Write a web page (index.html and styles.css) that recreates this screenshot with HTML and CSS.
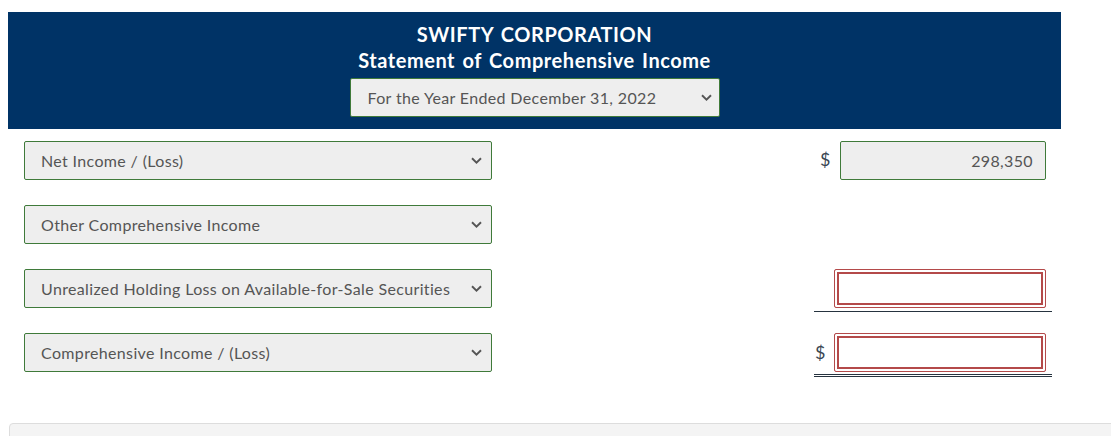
FILE: index.html
```html
<!DOCTYPE html>
<html>
<head>
<meta charset="utf-8">
<link rel="stylesheet" href="styles.css">
</head>
<body>
<div class="page">
  <div class="header">
    <div class="title">SWIFTY CORPORATION</div>
    <div class="title">Statement of Comprehensive Income</div>
    <div class="select period">
      <span>For the Year Ended December 31, 2022</span>
      <svg class="chev" width="11" height="7" viewBox="0 0 11 7"><path d="M1 1.2 L5.5 5.6 L10 1.2" fill="none" stroke="#555" stroke-width="1.9"/></svg>
    </div>
  </div>

  <div class="rows">
    <div class="row">
      <div class="select label"><span>Net Income / (Loss)</span><svg class="chev" width="11" height="7" viewBox="0 0 11 7"><path d="M1 1.2 L5.5 5.6 L10 1.2" fill="none" stroke="#555" stroke-width="1.9"/></svg></div>
      <div class="amount first">
        <span class="dollar">$</span>
        <div class="input filled">298,350</div>
      </div>
    </div>
    <div class="row">
      <div class="select label"><span>Other Comprehensive Income</span><svg class="chev" width="11" height="7" viewBox="0 0 11 7"><path d="M1 1.2 L5.5 5.6 L10 1.2" fill="none" stroke="#555" stroke-width="1.9"/></svg></div>
    </div>
    <div class="row">
      <div class="select label"><span>Unrealized Holding Loss on Available-for-Sale Securities</span><svg class="chev" width="11" height="7" viewBox="0 0 11 7"><path d="M1 1.2 L5.5 5.6 L10 1.2" fill="none" stroke="#555" stroke-width="1.9"/></svg></div>
      <div class="amount single">
        <span class="dollar"></span>
        <div class="input empty"></div>
      </div>
    </div>
    <div class="row">
      <div class="select label"><span>Comprehensive Income / (Loss)</span><svg class="chev" width="11" height="7" viewBox="0 0 11 7"><path d="M1 1.2 L5.5 5.6 L10 1.2" fill="none" stroke="#555" stroke-width="1.9"/></svg></div>
      <div class="amount double">
        <span class="dollar">$</span>
        <div class="input empty"></div>
      </div>
    </div>
  </div>

  <div class="footer-panel"></div>
</div>
</body>
</html>
```

FILE: styles.css
```css
html, body {
  margin: 0;
  padding: 0;
  background: #ffffff;
  font-family: Lato, "Open Sans", Arial, sans-serif;
  color: #4d4d4d;
}

.page {
  width: 1111px;
  height: 436px;
  overflow: hidden;
  padding-top: 12px;
  box-sizing: border-box;
}

.header {
  margin-left: 8px;
  width: 1053px;
  height: 117px;
  background: #003366;
  box-sizing: border-box;
  padding-top: 9px;
  display: flex;
  flex-direction: column;
  align-items: center;
}

.title {
  color: #ffffff;
  font-weight: 700;
  font-size: 20px;
  letter-spacing: 0.55px;
  word-spacing: 2px;
  line-height: 26px;
  height: 26px;
}

.select {
  display: flex;
  align-items: center;
  justify-content: space-between;
  box-sizing: border-box;
  background: #eeeeee;
  border: 1px solid #3f7a3a;
  border-radius: 2px;
  font-size: 16px;
  letter-spacing: 0.35px;
  color: #555555;
}

.period {
  margin-top: 5px;
  width: 370px;
  height: 39px;
  padding: 0 7px 0 17px;
}

.chev {
  flex: none;
}

.rows {
  margin-top: 12px;
  display: flex;
  flex-direction: column;
  gap: 25px;
}

.row {
  height: 39px;
  display: flex;
  align-items: flex-start;
}

.label {
  margin-left: 24px;
  width: 468px;
  height: 39px;
  padding: 0 9px 0 16px;
}

.amount {
  margin-left: 322px;
  width: 238px;
  display: flex;
  align-items: flex-start;
  box-sizing: border-box;
}

.dollar {
  font-size: 18px;
  color: #3a4653;
  line-height: 38px;
}

.amount.first {
  padding-left: 6px;
}

.amount.first .dollar {
  width: 20px;
  line-height: 36px;
}

.input {
  box-sizing: border-box;
  height: 39px;
}

.input.filled {
  width: 206px;
  background: #eeeeee;
  border: 1px solid #3f7a3a;
  border-radius: 2px;
  text-align: right;
  padding-right: 12px;
  font-size: 16px;
  letter-spacing: 0.35px;
  line-height: 37px;
  color: #555555;
}

.amount.single,
.amount.double {
  padding-left: 1px;
}

.amount.single .dollar,
.amount.double .dollar {
  width: 19px;
}

.input.empty {
  width: 212px;
  height: 39px;
  background: #ffffff;
  border: 1px solid #b44a4a;
  border-radius: 2px;
  box-shadow: inset 0 0 0 2px #ffffff, inset 0 0 0 4px #b44a4a;
}

.amount.single {
  height: 43px;
  border-bottom: 1px solid #26333f;
}

.amount.double {
  height: 44px;
  border-bottom: 3px double #26333f;
}

.footer-panel {
  margin-top: 51px;
  margin-left: 9px;
  width: 1110px;
  height: 40px;
  background: #f4f4f4;
  border: 1px solid #dddddd;
  border-radius: 4px;
}
```
